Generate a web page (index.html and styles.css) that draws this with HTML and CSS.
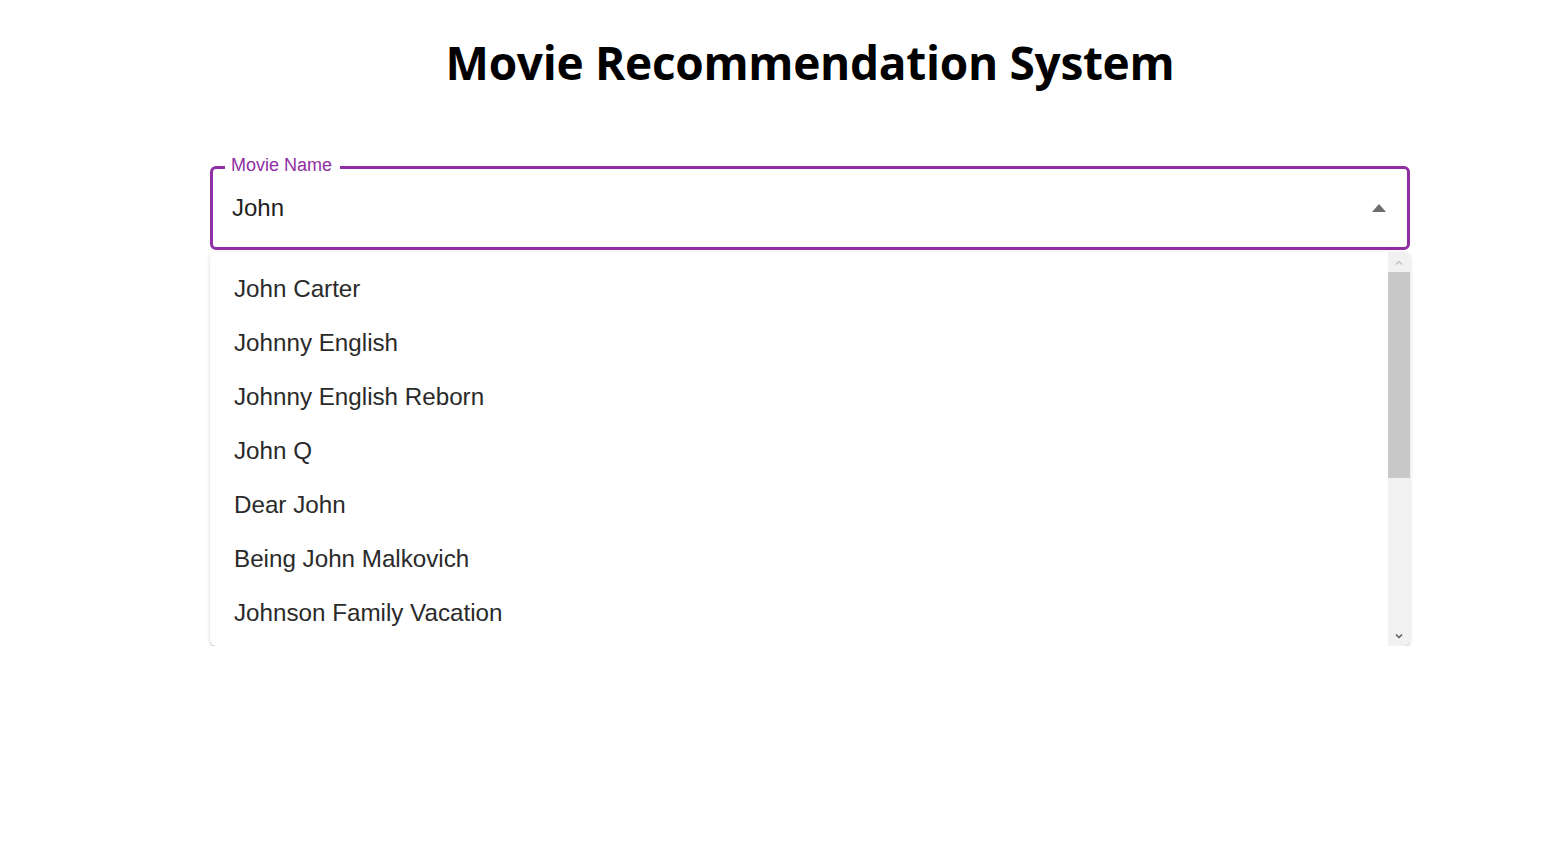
FILE: index.html
```html
<!DOCTYPE html>
<html>
<head>
<meta charset="utf-8">
<link rel="stylesheet" href="styles.css">
</head>
<body>
<div class="page">
  <h1 class="title">Movie Recommendation System</h1>
  <fieldset class="field">
    <legend class="label">Movie Name</legend>
    <div class="field-row">
      <span class="value">John</span>
      <svg class="caret" width="14" height="8" viewBox="0 0 14 8"><path d="M0 8 L7 0 L14 8 Z" fill="#6e6e6e"/></svg>
    </div>
  </fieldset>
  <div class="popup">
    <ul class="options">
      <li>John Carter</li>
      <li>Johnny English</li>
      <li>Johnny English Reborn</li>
      <li>John Q</li>
      <li>Dear John</li>
      <li>Being John Malkovich</li>
      <li>Johnson Family Vacation</li>
    </ul>
    <div class="scrollbar">
      <div class="sb-btn">
        <svg width="8" height="5" viewBox="0 0 8 5"><path d="M1 4.5 L4 1.5 L7 4.5" fill="none" stroke="#c4c4c4" stroke-width="1.5"/></svg>
      </div>
      <div class="sb-thumb"></div>
      <div class="sb-track"></div>
      <div class="sb-btn">
        <svg width="8" height="5" viewBox="0 0 8 5"><path d="M1 0.5 L4 3.5 L7 0.5" fill="none" stroke="#5a5a5a" stroke-width="1.5"/></svg>
      </div>
    </div>
  </div>
</div>
</body>
</html>
```

FILE: styles.css
```css
* { box-sizing: border-box; }
html, body { margin: 0; padding: 0; background: #fff; }
body { font-family: "Liberation Sans", Arial, sans-serif; }
.page {
  width: 1200px;
  margin-left: 210px;
  padding-top: 34px;
}
.title {
  margin: 0;
  text-align: center;
  font-family: "Open Sans", "Noto Sans", sans-serif;
  font-weight: 700;
  font-size: 46px;
  line-height: 56px;
  color: #000;
  letter-spacing: -0.3px;
}
.field {
  margin: 66px 0 0 0;
  padding: 0 21px;
  border: 3px solid #902fa3;
  border-radius: 6px;
  height: 94px;
  min-width: 0;
}
.label {
  margin-left: -9px;
  padding: 0 8px 4px 6px;
  font-size: 18px;
  line-height: 18px;
  color: #902fa3;
}
.field-row {
  display: flex;
  align-items: center;
  justify-content: space-between;
  height: 64px;
  margin-top: -2px;
}
.value {
  font-size: 24px;
  color: #222;
  margin-left: -2px;
}
.caret { margin-right: 0; margin-top: 0; }
.popup {
  margin-top: 2px;
  height: 394px;
  display: flex;
  border-radius: 6px;
  background: #fff;
  box-shadow: 0 2px 2px -1px rgba(0,0,0,0.25), 0 1px 4px rgba(0,0,0,0.14);
  overflow: hidden;
}
.options {
  flex: 1;
  list-style: none;
  margin: 0;
  padding: 10px 0 0 0;
  overflow: hidden;
}
.options li {
  height: 54px;
  display: flex;
  align-items: center;
  padding-left: 24px;
  font-size: 24.2px;
  color: #2a2a2a;
}
.scrollbar {
  width: 22px;
  display: flex;
  flex-direction: column;
  background: #f1f1f1;
}
.sb-btn {
  height: 20px;
  display: flex;
  align-items: center;
  justify-content: center;
}
.sb-thumb {
  height: 206px;
  background: #c8c8c8;
}
.sb-track { flex: 1; }
```
